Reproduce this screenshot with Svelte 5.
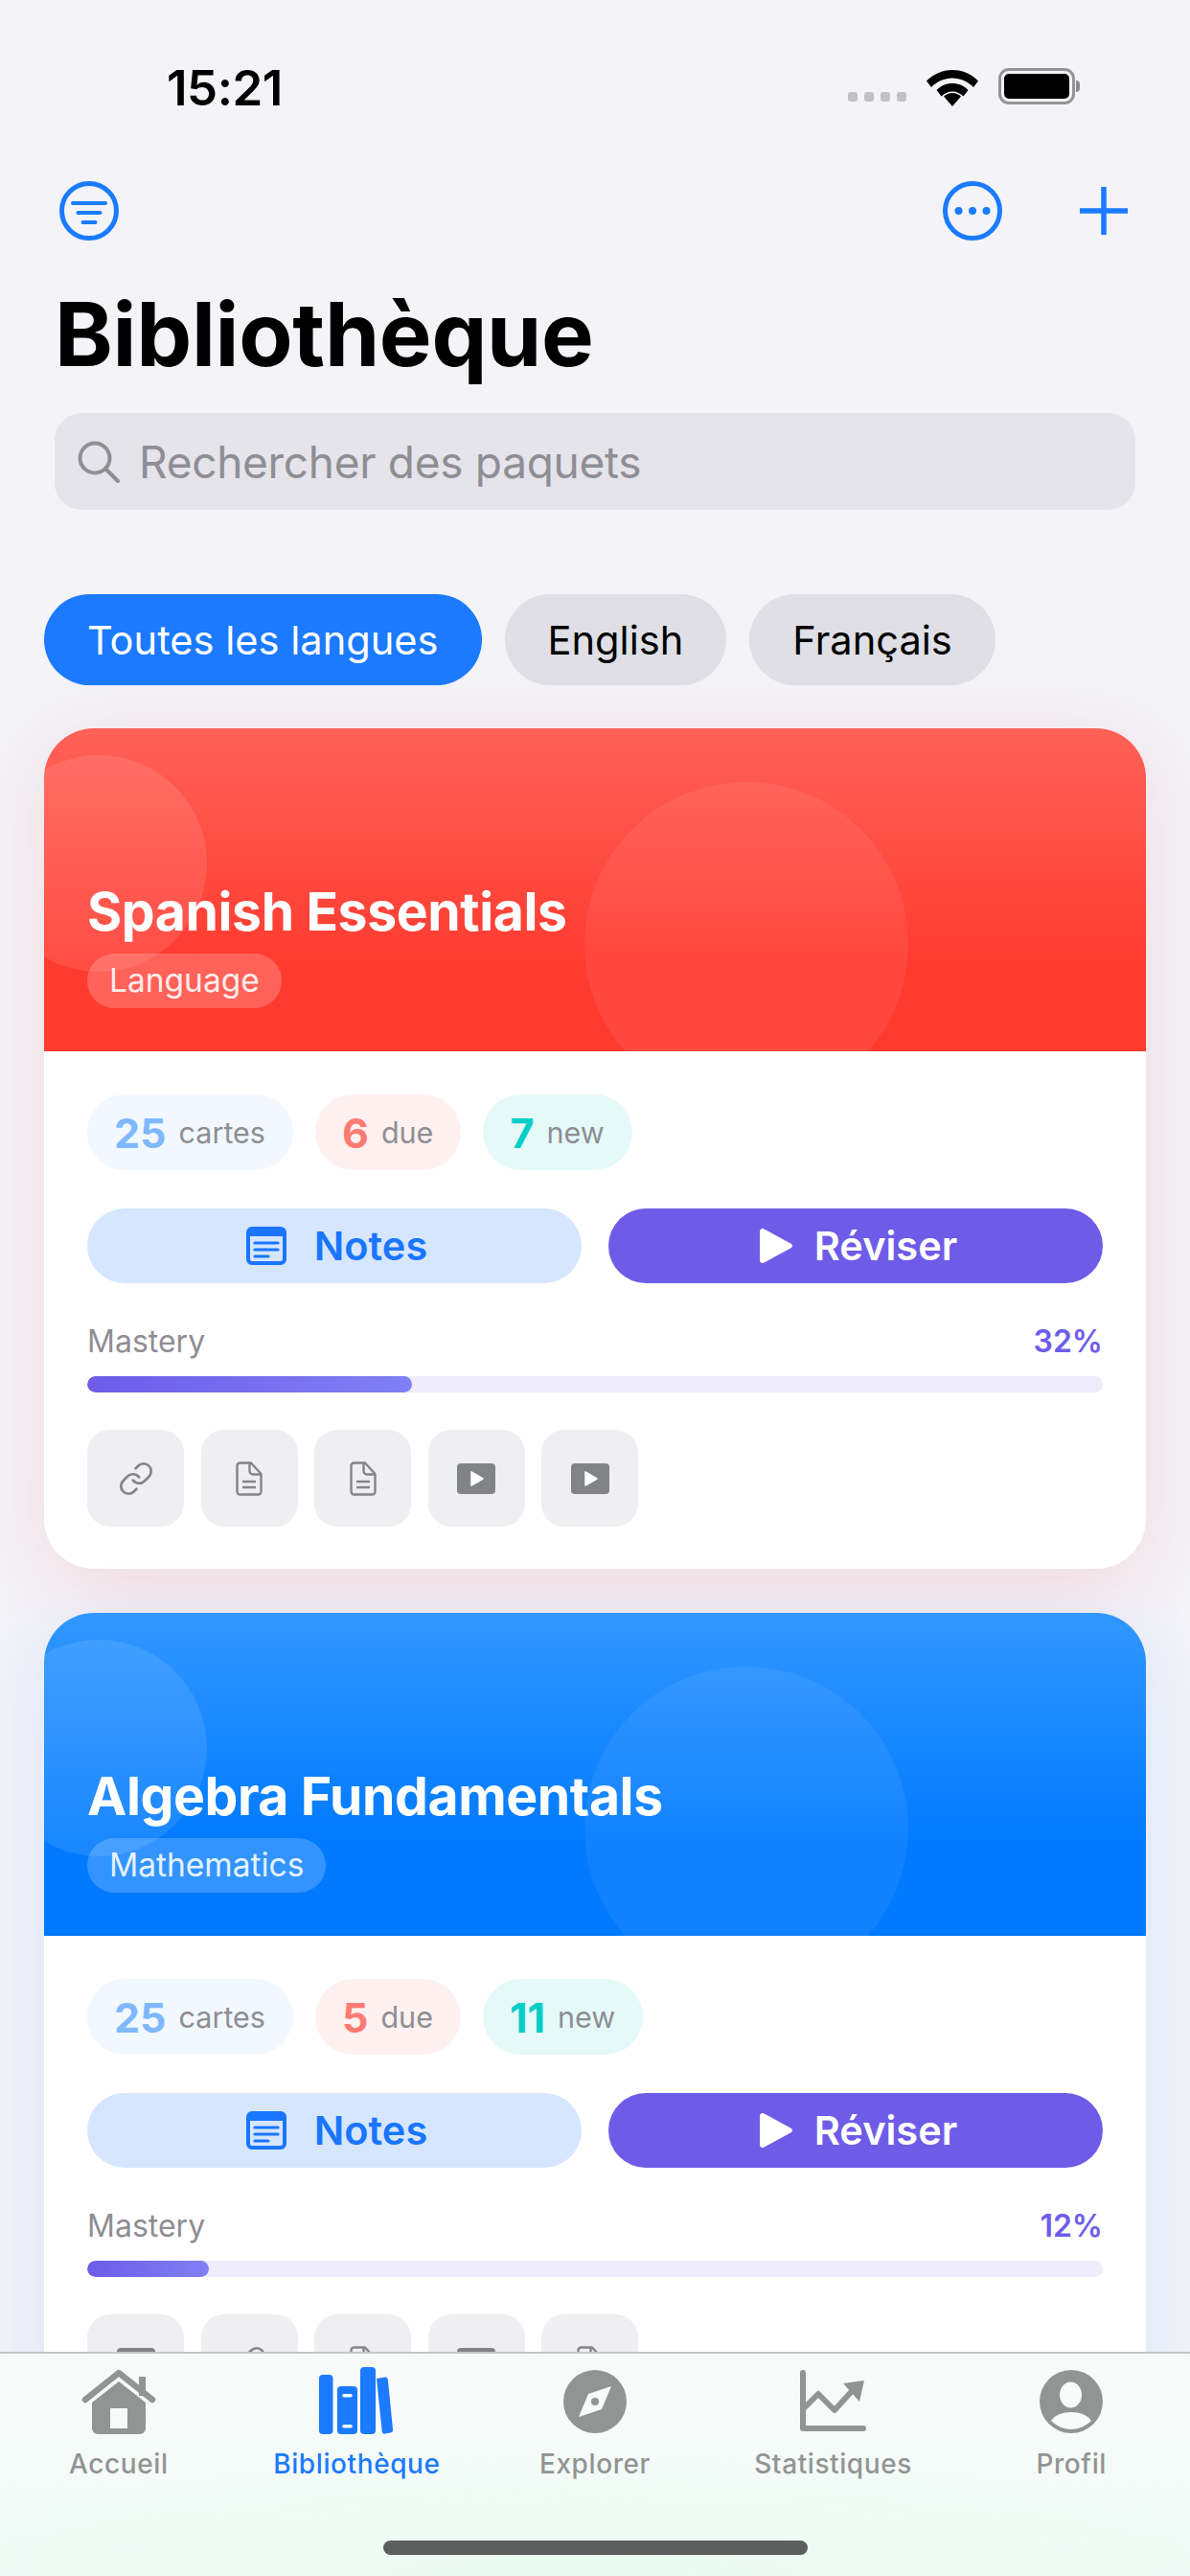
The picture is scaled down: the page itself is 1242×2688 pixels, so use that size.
<script>
  const decks = [
    { title: 'Spanish Essentials', tag: 'Language', tone: 'red', cards: 25, due: 6, fresh: 7, pct: 32, res: ['link', 'doc', 'doc', 'video', 'video'] },
    { title: 'Algebra Fundamentals', tag: 'Mathematics', tone: 'blue', cards: 25, due: 5, fresh: 11, pct: 12, res: ['video', 'link', 'doc', 'video', 'doc'] }
  ];
  const tabs = ['Accueil', 'Bibliothèque', 'Explorer', 'Statistiques', 'Profil'];
</script>

<div class="page">
  <header class="status">
    <span class="time">15:21</span>
    <div class="status-right">
      <div class="signal"><i></i><i></i><i></i><i></i></div>
      <svg class="wifi" width="56" height="42" viewBox="0 0 56 42">
        <path d="M1 14.500C8 7.500 17.500 3 28 3s20 4.500 27 11.500l-5 6.500C44 15 36.500 11.500 28 11.500S12 15 6 21z" />
        <path d="M11.500 24C16 19.500 21.500 17 28 17s12 2.500 16.500 7l-5 6.500C36.500 27.500 32.500 25.500 28 25.500s-8.500 2-11.500 5z" />
        <path d="M28 41l-9-10.500c2.500-2.300 5.500-3.500 9-3.500s6.500 1.200 9 3.500z" />
      </svg>
      <div class="battery"><div class="cell"></div><div class="cap"></div></div>
    </div>
  </header>

  <nav class="toolbar">
    <svg width="62" height="62" viewBox="0 0 62 62" class="blue-stroke">
      <circle cx="31" cy="31" r="28.500" stroke-width="5" />
      <path d="M14 23h34M19.500 33h23M24.500 43h13" stroke-width="4" stroke-linecap="round" />
    </svg>
    <div class="toolbar-right">
      <svg width="62" height="62" viewBox="0 0 62 62" class="blue-stroke">
        <circle cx="31" cy="31" r="28.500" stroke-width="5" />
        <circle class="dot" cx="16.500" cy="31" r="4" /><circle class="dot" cx="31" cy="31" r="4" /><circle class="dot" cx="45.500" cy="31" r="4" />
      </svg>
      <svg width="50" height="50" viewBox="0 0 50 50" class="blue-stroke">
        <path d="M25 1v48M1 25h48" stroke-width="5.500" stroke-linecap="round" />
      </svg>
    </div>
  </nav>

  <h1>Bibliothèque</h1>

  <div class="search">
    <svg width="48" height="48" viewBox="0 0 48 48" fill="none" stroke="#8e8e93" stroke-width="4" stroke-linecap="round">
      <circle cx="20" cy="20" r="15.500" /><path d="M31.500 31.500L44 44" />
    </svg>
    <span>Rechercher des paquets</span>
  </div>

  <div class="chips">
    <button class="chip active">Toutes les langues</button>
    <button class="chip">English</button>
    <button class="chip">Français</button>
  </div>

  <main class="decks">
    {#each decks as d}
      <article class="card {d.tone}">
        <div class="hero">
          <span class="orb one"></span>
          <span class="orb two"></span>
          <h2>{d.title}</h2>
          <span class="tag">{d.tag}</span>
        </div>
        <div class="body">
          <div class="stats">
            <div class="stat s-blue"><b>{d.cards}</b><span>cartes</span></div>
            <div class="stat s-red"><b>{d.due}</b><span>due</span></div>
            <div class="stat s-teal"><b>{d.fresh}</b><span>new</span></div>
          </div>
          <div class="actions">
            <button class="btn notes">
              <svg width="42" height="40" viewBox="0 0 42 40">
                <path fill="#1a75ff" fill-rule="evenodd" d="M6 0h30a6 6 0 0 1 6 6v28a6 6 0 0 1-6 6H6a6 6 0 0 1-6-6V6a6 6 0 0 1 6-6zM4 10v24a2 2 0 0 0 2 2h30a2 2 0 0 0 2-2V10z" />
                <path d="M9 17h24M9 24h24M9 31h14" stroke="#1a75ff" stroke-width="3.200" stroke-linecap="round" />
              </svg>
              Notes
            </button>
            <button class="btn review">
              <svg width="34" height="36" viewBox="0 0 34 36">
                <path fill="#fff" d="M0 3c0-2.500 2.500-3.800 4.600-2.500l27.500 15c2.500 1.300 2.500 3.700 0 5L4.600 35.500C2.500 36.800 0 35.500 0 33z" />
              </svg>
              Réviser
            </button>
          </div>
          <div class="mastery">
            <span>Mastery</span><strong>{d.pct}%</strong>
          </div>
          <div class="track"><div class="fill" style="width:{d.pct}%"></div></div>
          <div class="res">
            {#each d.res as r}
              <div class="tile">
                {#if r === 'link'}
                  <svg width="38" height="38" viewBox="0 0 24 24" fill="none" stroke="#848589" stroke-width="1.700" stroke-linecap="round">
                    <path d="M10 13a5 5 0 0 0 7.540.540l3-3a5 5 0 0 0-7.070-7.070l-1.720 1.710" />
                    <path d="M14 11a5 5 0 0 0-7.540-.540l-3 3a5 5 0 0 0 7.070 7.070l1.710-1.710" />
                  </svg>
                {:else if r === 'doc'}
                  <svg width="28" height="36" viewBox="0 0 28 36" fill="none" stroke="#848589" stroke-width="2.400" stroke-linejoin="round">
                    <path d="M4 1.500h12L26.500 13v18.500a3 3 0 0 1-3 3h-19a3 3 0 0 1-3-3v-27a3 3 0 0 1 3-3z" />
                    <path d="M14.500 1.500V10a3.500 3.500 0 0 0 3.500 3.500h8" />
                    <path d="M7 21h14M7 27h14" />
                  </svg>
                {:else}
                  <svg width="40" height="32" viewBox="0 0 40 32">
                    <rect width="40" height="32" rx="4" fill="#828387" />
                    <path d="M15 9v14l12-7z" fill="#fff" stroke="#fff" stroke-width="1.500" stroke-linejoin="round" />
                  </svg>
                {/if}
              </div>
            {/each}
          </div>
        </div>
      </article>
    {/each}
  </main>

  <footer class="tabbar">
    <div class="tabs">
      {#each tabs as t, i}
        <div class="tab" class:on={i === 1}>
          <svg width="90" height="76" viewBox="0 0 90 76">
            {#if i === 0}
              <path d="M10 35L45 7l35 28" fill="none" stroke="currentColor" stroke-width="6.500" stroke-linecap="round" stroke-linejoin="round" />
              <path fill="currentColor" d="M66 11h7v20h-7z" />
              <path fill="currentColor" fill-rule="evenodd" d="M45 16L17 38v27a6 6 0 0 0 6 6h44a6 6 0 0 0 6-6V38zM36 44h18v21H36z" />
            {:else if i === 1}
              <rect fill="currentColor" x="6" y="9" width="14.500" height="62" rx="4" />
              <path fill="currentColor" fill-rule="evenodd" d="M29 21h13a4 4 0 0 1 4 4v42a4 4 0 0 1-4 4H29a4 4 0 0 1-4-4V25a4 4 0 0 1 4-4zM32 29a1.800 1.800 0 0 0 0 3.600h7a1.800 1.800 0 0 0 0-3.600zM32 61a1.800 1.800 0 0 0 0 3.600h7a1.800 1.800 0 0 0 0-3.600z" />
              <rect fill="currentColor" x="49" y="1" width="16" height="70" rx="4" />
              <path fill="currentColor" d="M66 13l9-1.500c1.500-.2 2.600.8 2.800 2.300L83 66c.2 2-.6 3.200-2.400 3.500l-5.500.9c-2 .3-3.200-.6-3.400-2.500z" />
            {:else if i === 2}
              <circle fill="currentColor" cx="45" cy="37" r="33" />
              <path fill="#f7fbfa" d="M62 21L52 45 28 53l10-24z" />
              <circle fill="currentColor" cx="45" cy="37" r="4" />
            {:else if i === 3}
              <path d="M13 7v58h63" fill="none" stroke="currentColor" stroke-width="6" stroke-linecap="round" stroke-linejoin="round" />
              <path d="M14 44L29 29l17 17 19-21" fill="none" stroke="currentColor" stroke-width="6" stroke-linecap="round" stroke-linejoin="round" />
              <path fill="currentColor" d="M77 15L55 18l17 19z" />
            {:else}
              <circle fill="currentColor" cx="45" cy="37" r="33" />
              <ellipse fill="#f7fbfa" cx="44.500" cy="30" rx="11.500" ry="13.500" />
              <path fill="#f7fbfa" d="M24 57c4-6 12-9 21-9s17 3 21 9c-5 5-13 9-21 9s-16-4-21-9z" />
            {/if}
          </svg>
          <span>{t}</span>
        </div>
      {/each}
    </div>
    <div class="home"></div>
  </footer>
</div>

<style>
  :global(body) { margin: 0; background: #f3f3f8; }
  .page {
    position: relative;
    width: 1242px;
    height: 2688px;
    overflow: hidden;
    background: #f3f3f8;
    font-family: Inter, "Noto Sans", sans-serif;
    color: #000;
  }
  button { font-family: inherit; border: 0; padding: 0; }

  .status { height: 189px; box-sizing: border-box; display: flex; justify-content: space-between; padding: 62px 115px 0 174px; }
  .time { font-size: 51px; line-height: 60px; font-weight: 600; letter-spacing: -.5px; }
  .status-right { display: flex; align-items: flex-start; padding-top: 8px; }
  .signal { display: flex; gap: 7px; margin-top: 26px; margin-right: 20px; }
  .signal i { width: 10px; height: 10px; border-radius: 3px; background: #c2c2c6; }
  .wifi { fill: #000; margin-right: 20px; }
  .battery { display: flex; align-items: center; height: 40px; }
  .cell { width: 68px; height: 26px; border-radius: 8px; background: #000; border: 3px solid #f3f3f8; outline: 3px solid #949494; outline-offset: 0; margin: 0 4px 0 3px; box-sizing: content-box; }
  .cap { width: 4px; height: 12px; background: #8a8a8a; border-radius: 0 4px 4px 0; }

  .toolbar { display: flex; justify-content: space-between; align-items: center; padding: 0 65px 0 62px; height: 62px; }
  .toolbar-right { display: flex; align-items: center; gap: 81px; }
  .blue-stroke { fill: none; stroke: #1a7bff; }
  .dot { fill: #1a7bff; stroke: none; }

  h1 { margin: 48px 0 0 57px; font-size: 92px; line-height: 100px; font-weight: 700; letter-spacing: -.3px; height: 132px; }

  .search {
    margin: 0 57px;
    height: 101px;
    border-radius: 28px;
    background: #e4e4ea;
    display: flex;
    align-items: center;
    gap: 18px;
    padding-left: 22px;
    color: #8e8e93;
    font-size: 46px;
    letter-spacing: -.3px;
  }

  .chips { display: flex; gap: 24px; margin: 88px 0 0 46px; }
  .chip { height: 95px; padding: 0 45px; border-radius: 48px; background: #dfdfe5; font-size: 41.600px; color: #000; font-weight: 400; }
  .chip.active { background: #1b7aff; color: #fff; }

  .decks { display: flex; flex-direction: column; gap: 46px; margin: 45px 46px 0; }
  .card { border-radius: 52px; background: #fff; overflow: hidden; }
  .card.red { box-shadow: 0 18px 80px rgba(255, 59, 48, .13); }
  .card.blue { box-shadow: 0 18px 80px rgba(0, 122, 255, .11); }
  .hero {
    position: relative;
    height: 337px;
    box-sizing: border-box;
    padding: 0 45px 45px;
    display: flex;
    flex-direction: column;
    justify-content: flex-end;
    align-items: flex-start;
    overflow: hidden;
    color: #fff;
  }
  .red .hero { background: linear-gradient(180deg, #ff6258 0%, #ff3b30 72%); }
  .blue .hero { background: linear-gradient(180deg, #3297ff 0%, #007aff 72%); }
  .orb { position: absolute; border-radius: 50%; background: rgba(255, 255, 255, .1); }
  .orb.one { width: 226px; height: 226px; left: -56px; top: 28px; }
  .orb.two { width: 338px; height: 338px; left: 564px; top: 56px; background: rgba(255, 255, 255, .065); }
  h2 { position: relative; margin: 0 0 10px; font-size: 55.300px; line-height: 68px; font-weight: 700; letter-spacing: -.4px; }
  .tag { position: relative; height: 57px; line-height: 56px; padding: 0 23px; border-radius: 29px; background: rgba(255, 255, 255, .2); font-size: 33.500px; color: rgba(255, 255, 255, .9); }

  .body { padding: 45px 45px 0; height: 540px; box-sizing: border-box; }
  .stats { display: flex; gap: 23px; }
  .stat { height: 79px; border-radius: 40px; padding: 0 29px 0 28px; display: flex; align-items: center; gap: 13px; }
  .stat b { font-size: 43px; font-weight: 700; }
  .stat span { font-size: 30.500px; color: #8e8e93; }
  .s-blue { background: #f2f8ff; }
  .s-blue b { color: #7fb8fd; }
  .s-red { background: #fff1f0; }
  .s-red b { color: #ff7b72; }
  .s-teal { background: #e6f9f9; }
  .s-teal b { color: #00cfc8; }

  .actions { display: grid; grid-template-columns: 1fr 1fr; gap: 28px; margin-top: 40px; }
  .btn { height: 78px; border-radius: 39px; display: flex; align-items: center; justify-content: center; font-size: 41.500px; font-weight: 600; }
  .notes { background: #d6e6ff; color: #1a75ff; gap: 29px; padding-left: 5px; }
  .review { background: #6e5ce8; color: #fff; gap: 23px; padding-left: 6px; }

  .mastery { display: flex; justify-content: space-between; align-items: center; margin-top: 40px; height: 40px; font-size: 32px; color: #8e8e93; }
  .mastery strong { color: #6e5ce8; font-weight: 600; }
  .track { margin-top: 17px; height: 17px; border-radius: 9px; background: #eeebfc; overflow: hidden; }
  .fill { height: 100%; border-radius: 9px; background: linear-gradient(90deg, #6e5ce8, #8080f5); }

  .res { display: flex; gap: 17.500px; margin-top: 39px; }
  .tile { width: 101px; height: 101px; border-radius: 24px; background: #efeff1; display: flex; align-items: center; justify-content: center; }

  .tabbar {
    position: absolute;
    left: 0; right: 0; bottom: 0;
    height: 234px;
    box-sizing: border-box;
    border-top: 2px solid #c6c7c9;
    background: radial-gradient(ellipse 700px 130px at 50% 100%, #eafcf2 0%, rgba(234, 252, 242, 0) 100%), linear-gradient(180deg, #f8fafa 0%, #f6fbf9 35%, #f0fbf6 100%);
  }
  .tabs { display: flex; padding: 13px 0 0 0; margin: 0 -0.500px; }
  .tab { flex: 1; display: flex; flex-direction: column; align-items: center; color: #929493; }
  .tab svg { display: block; }
  .tab span { font-size: 28px; line-height: 34px; font-weight: 500; margin-top: 9px; letter-spacing: .6px; }
  .tab.on { color: #1b7aff; }
  .home { position: absolute; left: 400px; top: 195px; width: 443px; height: 15px; border-radius: 8px; background: #5b5e5d; }
</style>
